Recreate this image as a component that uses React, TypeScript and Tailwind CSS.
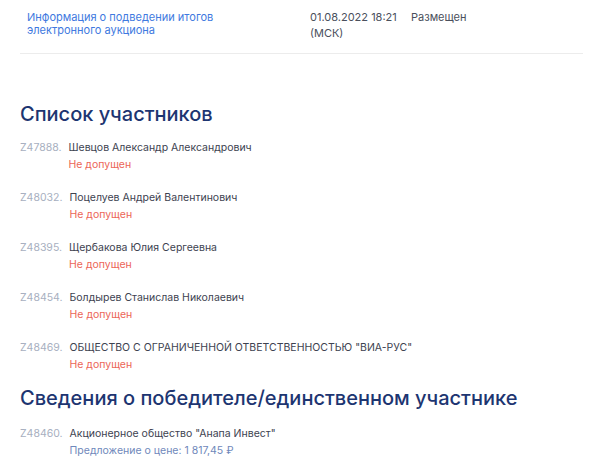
const participants = [
  { id: "Z47888.", name: "Шевцов Александр Александрович" },
  { id: "Z48032.", name: "Поцелуев Андрей Валентинович" },
  { id: "Z48395.", name: "Щербакова Юлия Сергеевна" },
  { id: "Z48454.", name: "Болдырев Станислав Николаевич" },
  { id: "Z48469.", name: "ОБЩЕСТВО С ОГРАНИЧЕННОЙ ОТВЕТСТВЕННОСТЬЮ \"ВИА-РУС\"" },
];

export default function App() {
  return (
    <div className="min-h-screen bg-white pl-5 pr-[14px] font-['Inter',sans-serif] text-[10.5px]">
      <div className="flex items-start border-b border-[#ececec] pt-[11px] pb-[12px] pl-[7px] text-[11px]">
        <div className="w-[283px] leading-[12.5px] text-[#4079e0]">
          Информация о подведении итогов
          <br />
          электронного аукциона
        </div>
        <div className="-mt-[2px] w-[101px] leading-[16px] text-[#4a4f5c]">
          01.08.2022 18:21
          <br />
          (МСК)
        </div>
        <div className="-mt-[2px] leading-[16px] text-[#4a4f5c]">Размещен</div>
      </div>

      <h2 className="mt-[48px] text-[20px] font-medium leading-[24px] text-[#1d3571]">
        Список участников
      </h2>

      <ul className="mt-[13px]">
        {participants.map((p) => (
          <li key={p.id} className="flex h-[50px] gap-[7px]">
            <span className="leading-[17px] text-[#a7afc0]">{p.id}</span>
            <div className="flex flex-col leading-[17px]">
              <span className="text-[#3d4250]">{p.name}</span>
              <span className="text-[#ec6557]">Не допущен</span>
            </div>
          </li>
        ))}
      </ul>

      <h2 className="-mt-[3px] text-[20px] font-medium leading-[24px] text-[#1d3571]">
        Сведения о победителе/единственном участнике
      </h2>

      <div className="mt-[15px] flex gap-[7px]">
        <span className="leading-[17px] text-[#a7afc0]">Z48460.</span>
        <div className="flex flex-col leading-[17px]">
          <span className="text-[#3d4250]">Акционерное общество "Анапа Инвест"</span>
          <span className="text-[#6f88bb]">Предложение о цене: 1 817,45 ₽</span>
        </div>
      </div>
    </div>
  );
}
